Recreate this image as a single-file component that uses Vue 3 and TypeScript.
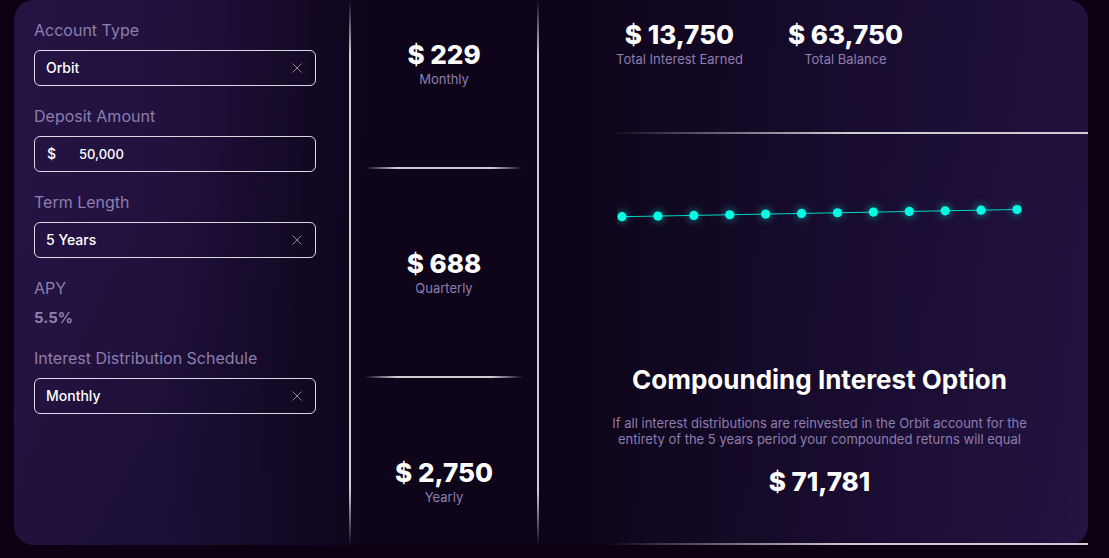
<script setup lang="ts">
import { computed, ref } from 'vue'

interface Stat {
  label: string
  value: string
}

const account = ref('Orbit')
const deposit = ref('50,000')
const term = ref('5 Years')
const schedule = ref('Monthly')

const payouts: Stat[] = [
  { value: '$ 229', label: 'Monthly' },
  { value: '$ 688', label: 'Quarterly' },
  { value: '$ 2,750', label: 'Yearly' },
]

const totals: Stat[] = [
  { value: '$ 13,750', label: 'Total Interest Earned' },
  { value: '$ 63,750', label: 'Total Balance' },
]

const pointCount = 12
const points = computed(() =>
  Array.from({ length: pointCount }, (_, i) => {
    const t = i / (pointCount - 1)
    return { x: 5 + t * 395, y: 82.7 - t * 7.2 }
  }),
)
const linePoints = computed(() => points.value.map((p) => `${p.x},${p.y}`).join(' '))
</script>

<template>
  <main class="calculator">
    <form class="inputs" @submit.prevent>
      <div class="field">
        <label for="account">Account Type</label>
        <div class="control">
          <select id="account" v-model="account">
            <option>Orbit</option>
          </select>
          <button type="button" class="clear" aria-label="Clear account type" @click="account = ''">
            <svg viewBox="0 0 12 12"><path d="M1.5 1.5 10.5 10.5M10.5 1.5 1.5 10.5" /></svg>
          </button>
        </div>
      </div>
      <div class="field">
        <label for="deposit">Deposit Amount</label>
        <div class="control amount">
          <span class="currency">$</span>
          <input id="deposit" v-model="deposit" type="text" inputmode="numeric" />
        </div>
      </div>
      <div class="field">
        <label for="term">Term Length</label>
        <div class="control">
          <select id="term" v-model="term">
            <option>5 Years</option>
          </select>
          <button type="button" class="clear" aria-label="Clear term length" @click="term = ''">
            <svg viewBox="0 0 12 12"><path d="M1.5 1.5 10.5 10.5M10.5 1.5 1.5 10.5" /></svg>
          </button>
        </div>
      </div>
      <div class="field">
        <span>APY</span>
        <strong>5.5%</strong>
      </div>
      <div class="field">
        <label for="schedule">Interest Distribution Schedule</label>
        <div class="control">
          <select id="schedule" v-model="schedule">
            <option>Monthly</option>
          </select>
          <button type="button" class="clear" aria-label="Clear schedule" @click="schedule = ''">
            <svg viewBox="0 0 12 12"><path d="M1.5 1.5 10.5 10.5M10.5 1.5 1.5 10.5" /></svg>
          </button>
        </div>
      </div>
    </form>

    <section class="payouts">
      <div v-for="payout in payouts" :key="payout.label" class="payout">
        <div class="value">{{ payout.value }}</div>
        <div class="caption">{{ payout.label }}</div>
      </div>
    </section>

    <section class="summary">
      <div class="totals">
        <div v-for="total in totals" :key="total.label" class="total">
          <div class="value">{{ total.value }}</div>
          <div class="caption">{{ total.label }}</div>
        </div>
      </div>
      <div class="rule"></div>
      <div class="growth">
        <svg class="chart" viewBox="0 0 405 230" role="img" aria-label="Balance over time">
          <polyline :points="linePoints" />
          <circle v-for="p in points" :key="p.x" :cx="p.x" :cy="p.y" r="4.6" />
        </svg>
        <h2>Compounding Interest Option</h2>
        <p>
          If all interest distributions are reinvested in the Orbit account for the entirety of the
          5 years period your compounded returns will equal
        </p>
        <div class="value">$ 71,781</div>
      </div>
      <div class="rule"></div>
    </section>
  </main>
</template>

<style>
body {
  margin: 0;
  background: #0d0013;
}
</style>

<style scoped>
.calculator {
  display: grid;
  grid-template-columns: 337fr 188fr 549fr;
  margin: 0 21px 13px 14px;
  border-radius: 20px;
  background:
    linear-gradient(90deg, #0e051b00 0%, #0e051b1a 14%, #0e051ba0 25%, #0e051b 33%, #0e051b 53%, #0e051b66 78%, #0e051b00 100%),
    linear-gradient(130deg, #251344 0%, #241342 20%, #1c1038 38%, #1f113c 68%, #251344 100%);
  color: #8d7eae;
  font-family: Inter, "Liberation Sans", sans-serif;
  font-size: 16px;
  line-height: 20px;
}

.inputs,
.payouts {
  box-sizing: border-box;
  background: linear-gradient(transparent, #cfcbd0 10%, #cfcbd0 90%, transparent) right / 2px 100% no-repeat;
}

.inputs {
  display: flex;
  flex-direction: column;
  gap: 20px;
  padding: 20px 35px 20px 20px;
}

.field {
  display: flex;
  flex-direction: column;
  gap: 10px;
}

.field strong {
  font-size: 15px;
}

.control {
  display: flex;
  align-items: center;
  box-sizing: border-box;
  height: 36px;
  padding: 0 12px 0 11px;
  border: 1px solid #dcd8e2;
  border-radius: 6px;
}

.control select,
.control input {
  flex: 1;
  min-width: 0;
  margin: 0;
  padding: 0;
  border: 0;
  outline: 0;
  appearance: none;
  background: transparent;
  color: #fff;
  font: 500 14px/20px Inter, "Liberation Sans", sans-serif;
}

.control.amount {
  padding-left: 12px;
}

.control.amount input {
  font-size: 13px;
}

.currency {
  width: 32px;
  color: #fff;
  font-size: 14px;
  font-weight: 500;
}

.clear {
  display: flex;
  padding: 0;
  border: 0;
  background: none;
  cursor: pointer;
}

.clear svg {
  width: 12px;
  height: 12px;
  stroke: #8d8794;
  stroke-width: 1;
  fill: none;
}

.payouts {
  padding-right: 2px;
  text-align: center;
}

.payout {
  padding: 79px 0 80px;
}

.payout:first-child {
  padding-top: 39px;
}

.payout:last-child {
  padding-bottom: 40px;
}

.payout + .payout::before {
  content: "";
  display: block;
  height: 2px;
  margin: -79px 14px 79px;
  background: linear-gradient(90deg, transparent, #cfcbd0 20%, #cfcbd0 80%, transparent);
}

.value {
  color: #fff;
  font-size: 26px;
  font-weight: 800;
  line-height: 32px;
}

.caption {
  font-size: 13px;
  line-height: 16px;
}

.summary {
  display: flex;
  flex-direction: column;
  padding-left: 69px;
}

.totals {
  display: flex;
  gap: 45px;
  padding: 19px 8px 65px;
  text-align: center;
}

.rule {
  height: 2px;
  background: linear-gradient(90deg, transparent, #cfcbd0 50%);
}

.growth {
  flex: 1;
  margin-right: 57px;
  text-align: center;
}

.chart {
  display: block;
  box-sizing: border-box;
  width: 100%;
  height: 230px;
  padding: 0 9px;
}

.chart polyline {
  fill: none;
  stroke: #00d9c4;
  stroke-width: 1;
}

.chart circle {
  fill: #00ffe5;
  filter: drop-shadow(0 0 4px #00ffe5aa);
}

h2 {
  margin: 0 0 19px;
  color: #fff;
  font-size: 26px;
  font-weight: 700;
  line-height: 32px;
}

p {
  margin: 0 0 19px;
  font-size: 13px;
  line-height: 16px;
}
</style>
